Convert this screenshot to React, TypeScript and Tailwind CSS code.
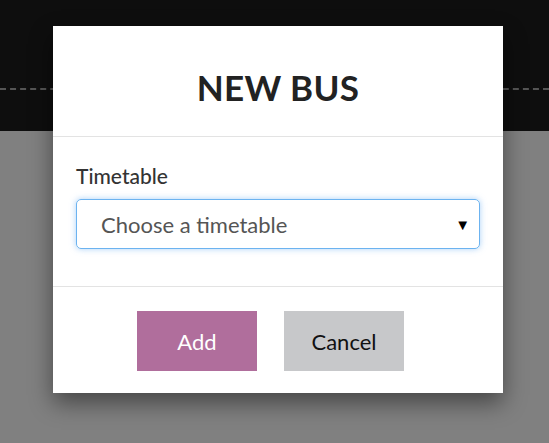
import React from "react";

export default function App() {
  return (
    <div className="relative w-[549px] h-[443px] overflow-hidden bg-[#808080]" style={{ fontFamily: "Lato, 'Open Sans', sans-serif" }}>
      <div className="h-[131px] bg-[#0e0e0e] pt-[88px]">
        <div className="border-t-2 border-dashed border-[#555]" />
      </div>

      <div className="absolute left-[53px] top-[26px] w-[450px] h-[367px] bg-white flex flex-col shadow-[0_10px_22px_rgba(0,0,0,0.45)]">
        <div className="h-[111px] border-b border-[#e3e3e3] flex items-center justify-center pt-[13px]">
          <h1 className="text-[35px] font-bold text-[#222] leading-none tracking-[0.3px]">NEW BUS</h1>
        </div>
        <div className="h-[150px] border-b border-[#e3e3e3] px-[23px] pt-[27px]">
          <div className="text-[21px] leading-[24px] text-[#333] font-medium">Timetable</div>
          <div className="mt-[11px] h-[50px] rounded-[5px] border border-[#6cb3f0] shadow-[0_0_6px_rgba(100,170,240,0.55)] flex items-center justify-between pl-[24px] pr-[9px]">
            <span className="text-[22px] text-[#555]">Choose a timetable</span>
            <span className="text-[15px] text-black">▼</span>
          </div>
        </div>
        <div className="flex-1 flex items-start justify-center gap-[27px] pt-[24px] pr-[15px]">
          <button className="w-[120px] h-[60px] bg-[#b06e9c] text-white text-[22px]">Add</button>
          <button className="w-[120px] h-[60px] bg-[#c7c8ca] text-[#111] text-[22px]">Cancel</button>
        </div>
      </div>
    </div>
  );
}
